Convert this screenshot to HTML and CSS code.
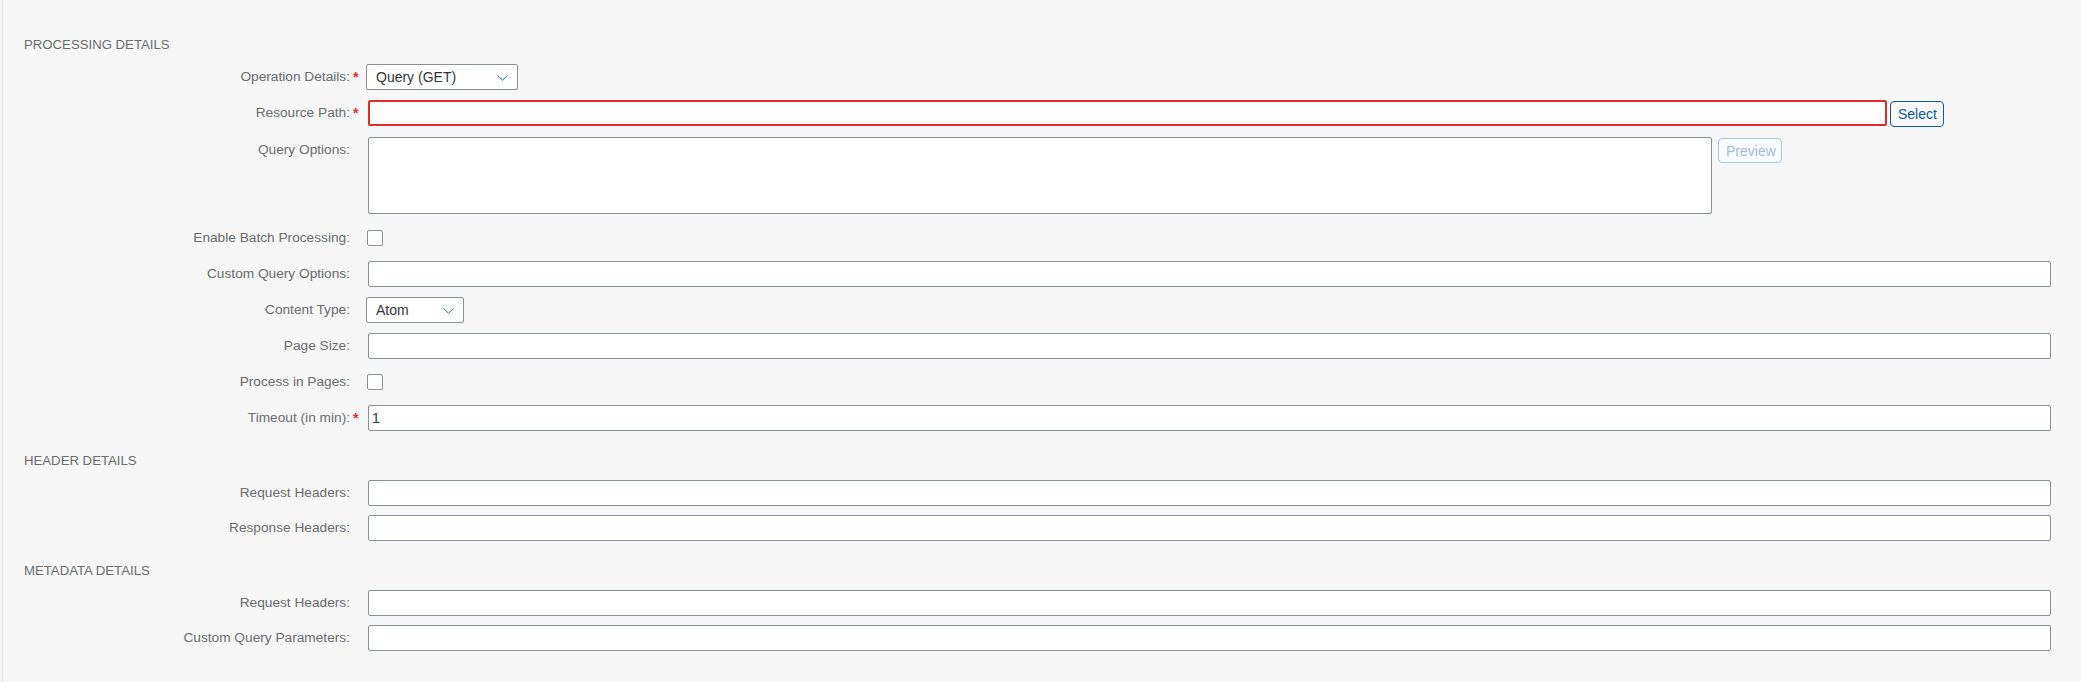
FILE: index.html
```html
<!DOCTYPE html>
<html lang="en">
<head>
<meta charset="utf-8">
<title>Processing Details</title>
<link rel="stylesheet" href="styles.css">
</head>
<body>
<div class="page">
  <section class="section">
    <h2 class="section-title">Processing Details</h2>
    <div class="rows">
      <div class="row">
        <label class="label">Operation Details:<span class="req">*</span></label>
        <div class="field">
          <div class="dropdown dropdown-op"><span>Query (GET)</span>
            <svg class="chev" width="11" height="6" viewBox="0 0 11 6"><path d="M0.5 0.5 L5.5 5.2 L10.5 0.5" fill="none" stroke="#0a6ed1" stroke-width="1"/></svg>
          </div>
        </div>
      </div>
      <div class="row">
        <label class="label">Resource Path:<span class="req">*</span></label>
        <div class="field">
          <input class="input input-error input-path" type="text">
          <button class="btn btn-select" type="button">Select</button>
        </div>
      </div>
      <div class="row row-tall">
        <label class="label">Query Options:<span class="req"></span></label>
        <div class="field field-top">
          <textarea class="textarea"></textarea>
          <button class="btn btn-disabled" type="button">Preview</button>
        </div>
      </div>
      <div class="row">
        <label class="label">Enable Batch Processing:<span class="req"></span></label>
        <div class="field"><span class="checkbox"></span></div>
      </div>
      <div class="row">
        <label class="label">Custom Query Options:<span class="req"></span></label>
        <div class="field"><input class="input input-full" type="text"></div>
      </div>
      <div class="row">
        <label class="label">Content Type:<span class="req"></span></label>
        <div class="field">
          <div class="dropdown dropdown-ct"><span>Atom</span>
            <svg class="chev" width="11" height="6" viewBox="0 0 11 6"><path d="M0.5 0.5 L5.5 5.2 L10.5 0.5" fill="none" stroke="#0a6ed1" stroke-width="1"/></svg>
          </div>
        </div>
      </div>
      <div class="row">
        <label class="label">Page Size:<span class="req"></span></label>
        <div class="field"><input class="input input-full" type="text"></div>
      </div>
      <div class="row">
        <label class="label">Process in Pages:<span class="req"></span></label>
        <div class="field"><span class="checkbox"></span></div>
      </div>
      <div class="row">
        <label class="label">Timeout (in min):<span class="req">*</span></label>
        <div class="field"><input class="input input-full" type="text" value="1"></div>
      </div>
    </div>
  </section>

  <section class="section">
    <h2 class="section-title">Header Details</h2>
    <div class="rows rows-compact">
      <div class="row">
        <label class="label">Request Headers:<span class="req"></span></label>
        <div class="field"><input class="input input-full" type="text"></div>
      </div>
      <div class="row">
        <label class="label">Response Headers:<span class="req"></span></label>
        <div class="field"><input class="input input-full" type="text"></div>
      </div>
    </div>
  </section>

  <section class="section">
    <h2 class="section-title">Metadata Details</h2>
    <div class="rows rows-compact">
      <div class="row">
        <label class="label">Request Headers:<span class="req"></span></label>
        <div class="field"><input class="input input-full" type="text"></div>
      </div>
      <div class="row">
        <label class="label">Custom Query Parameters:<span class="req"></span></label>
        <div class="field"><input class="input input-full" type="text"></div>
      </div>
    </div>
  </section>
</div>
</body>
</html>
```

FILE: styles.css
```css
html, body {
  margin: 0;
  padding: 0;
  background: #f7f7f7;
}

body {
  font-family: "Liberation Sans", Arial, sans-serif;
  font-size: 14px;
  color: #32363a;
}

.page {
  margin-left: 2px;
  border-left: 1px solid #e0e0e0;
  min-height: 682px;
  box-sizing: border-box;
  padding: 37px 30px 0 21px;
}

.section + .section {
  margin-top: 22px;
}

.section-title {
  margin: 0 0 11px 0;
  font-size: 13.2px;
  line-height: 16px;
  height: 16px;
  font-weight: normal;
  text-transform: uppercase;
  color: #6a6d70;
}

.rows {
  display: flex;
  flex-direction: column;
  gap: 10px;
}

.rows-compact {
  gap: 9px;
}

.row {
  display: flex;
  align-items: center;
  min-height: 26px;
  gap: 6px;
}

.row-tall {
  align-items: flex-start;
  margin-top: 1px;
  margin-bottom: 1px;
}

.label {
  flex: 0 0 338px;
  display: flex;
  justify-content: flex-end;
  line-height: 26px;
  height: 26px;
  color: #6a6d70;
  font-size: 13.7px;
  white-space: nowrap;
}

.req {
  flex: 0 0 12px;
  padding-left: 3px;
  box-sizing: border-box;
  color: #e02c2c;
  font-weight: bold;
  font-size: 14px;
}

.field {
  flex: 1 1 auto;
  display: flex;
  align-items: center;
  min-width: 0;
}

.field-top {
  align-items: flex-start;
}

.input {
  height: 26px;
  box-sizing: border-box;
  border: 1px solid #89919a;
  border-radius: 2px;
  background: #fff;
  font-family: "Liberation Sans", Arial, sans-serif;
  font-size: 14px;
  color: #32363a;
  padding: 0 3px;
  margin: 0;
  outline: none;
}

.input-full {
  width: 100%;
}

.input-path {
  width: 90.25%;
}

.input-error {
  border: 2px solid #e02c2c;
}

.textarea {
  display: block;
  width: 79.86%;
  height: 77px;
  box-sizing: border-box;
  border: 1px solid #89919a;
  border-radius: 2px;
  background: #fff;
  margin: 0;
  padding: 3px;
  resize: none;
  font-family: "Liberation Sans", Arial, sans-serif;
  font-size: 14px;
}

.btn {
  font-family: "Liberation Sans", Arial, sans-serif;
  font-size: 14px;
  border-radius: 4px;
  padding: 0 7px;
  margin: 0;
  box-sizing: border-box;
  cursor: pointer;
}

.btn-select {
  height: 26px;
  width: 54px;
  margin: 1px 0 -1px 3px;
  border: 1px solid #0a5aa8;
  color: #0a5aa8;
  background: #f9f9f9;
}

.btn-disabled {
  height: 25px;
  width: 64px;
  margin-left: 6px;
  margin-top: 1px;
  border: 1px solid #a9c5e2;
  color: #a3bedb;
  background: #fafbfc;
}

.dropdown {
  height: 26px;
  box-sizing: border-box;
  border: 1px solid #89919a;
  border-radius: 2px;
  background: #fff;
  margin-left: -2px;
  padding: 0 9px 0 9px;
  display: flex;
  align-items: center;
  justify-content: space-between;
  color: #32363a;
  font-size: 14px;
}

.dropdown-op {
  width: 152px;
}

.dropdown-ct {
  width: 98px;
}

.chev {
  display: block;
  margin-top: 1px;
}

.checkbox {
  display: block;
  width: 16px;
  height: 16px;
  box-sizing: border-box;
  border: 1px solid #89919a;
  border-radius: 2px;
  background: #fff;
  margin-left: -1px;
}
```
